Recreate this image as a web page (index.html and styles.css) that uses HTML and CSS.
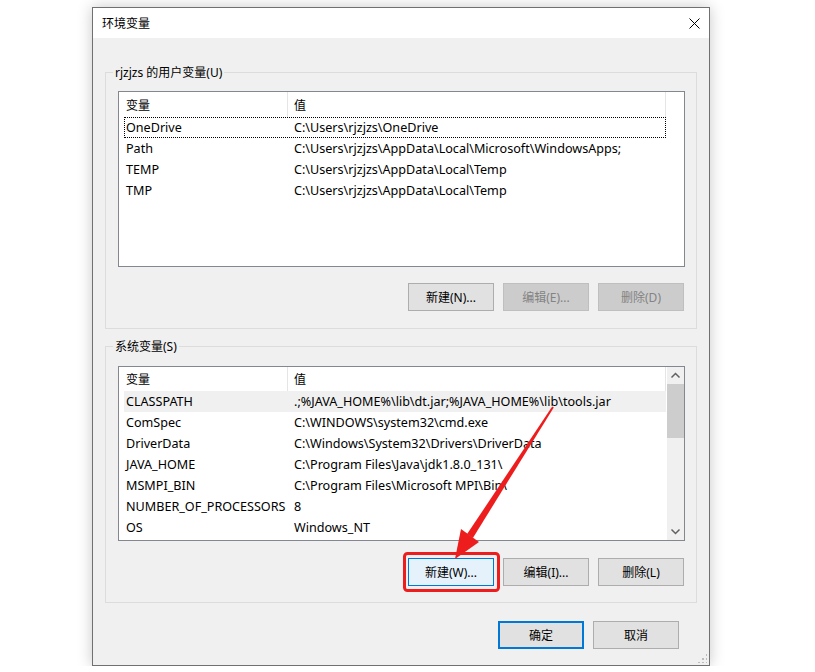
FILE: index.html
```html
<!DOCTYPE html>
<html lang="zh-CN">
<head>
	<meta charset="utf-8">
	<title>环境变量</title>
	<link rel="stylesheet" href="styles.css">
</head>
<body>
	<div class="window">
		<div class="titlebar">
			<span class="title">环境变量</span>
			<svg class="close" width="11" height="11" viewBox="0 0 11 11">
				<path d="M0.5 0.5 L10.5 10.5 M10.5 0.5 L0.5 10.5" stroke="#000" stroke-width="1"/>
			</svg>
		</div>
		<div class="content">
			<div class="group group-user">
				<span class="legend">rjzjzs 的用户变量(U)</span>
				<div class="list list-user">
					<div class="list-body">
						<div class="list-head"><div class="col-name">变量</div><div class="col-value">值</div></div>
						<div class="row row-focus"><div class="col-name">OneDrive</div><div class="col-value">C:\Users\rjzjzs\OneDrive</div></div>
						<div class="row"><div class="col-name">Path</div><div class="col-value">C:\Users\rjzjzs\AppData\Local\Microsoft\WindowsApps;</div></div>
						<div class="row"><div class="col-name">TEMP</div><div class="col-value">C:\Users\rjzjzs\AppData\Local\Temp</div></div>
						<div class="row"><div class="col-name">TMP</div><div class="col-value">C:\Users\rjzjzs\AppData\Local\Temp</div></div>
					</div>
				</div>
				<div class="buttons">
					<button class="btn">新建(N)...</button>
					<button class="btn" disabled>编辑(E)...</button>
					<button class="btn" disabled>删除(D)</button>
				</div>
			</div>

			<div class="group group-sys">
				<span class="legend">系统变量(S)</span>
				<div class="list list-sys">
					<div class="list-body">
						<div class="list-head"><div class="col-name">变量</div><div class="col-value">值</div></div>
						<div class="row row-hover"><div class="col-name">CLASSPATH</div><div class="col-value">.;%JAVA_HOME%\lib\dt.jar;%JAVA_HOME%\lib\tools.jar</div></div>
						<div class="row"><div class="col-name">ComSpec</div><div class="col-value">C:\WINDOWS\system32\cmd.exe</div></div>
						<div class="row"><div class="col-name">DriverData</div><div class="col-value">C:\Windows\System32\Drivers\DriverData</div></div>
						<div class="row"><div class="col-name">JAVA_HOME</div><div class="col-value">C:\Program Files\Java\jdk1.8.0_131\</div></div>
						<div class="row"><div class="col-name">MSMPI_BIN</div><div class="col-value">C:\Program Files\Microsoft MPI\Bin\</div></div>
						<div class="row"><div class="col-name">NUMBER_OF_PROCESSORS</div><div class="col-value">8</div></div>
						<div class="row"><div class="col-name">OS</div><div class="col-value">Windows_NT</div></div>
					</div>
					<div class="scrollbar">
						<svg class="sb-arrow" width="17" height="17" viewBox="0 0 17 17">
							<path d="M4.5 10.5 L8.5 6.5 L12.5 10.5" fill="none" stroke="#606060" stroke-width="1.5"/>
						</svg>
						<div class="sb-track"><div class="sb-thumb"></div></div>
						<svg class="sb-arrow" width="17" height="17" viewBox="0 0 17 17">
							<path d="M4.5 6.5 L8.5 10.5 L12.5 6.5" fill="none" stroke="#606060" stroke-width="1.5"/>
						</svg>
					</div>
				</div>
				<div class="buttons">
					<button class="btn btn-hot">新建(W)...</button>
					<button class="btn">编辑(I)...</button>
					<button class="btn">删除(L)</button>
				</div>
			</div>

			<div class="footer">
				<button class="btn btn-default">确定</button>
				<button class="btn">取消</button>
			</div>
		</div>
		<div class="grip"></div>
	</div>

	<!-- red annotation drawn over the screenshot -->
	<svg class="annot" width="815" height="672" viewBox="0 0 815 672">
		<rect x="404.5" y="553.5" width="94" height="37" rx="3" fill="none" stroke="#ee1d1d" stroke-width="3"/>
		<polygon points="553.8,407.5 552.2,406.5 467.1,534.1 472.9,537.9" fill="#ee1d1d"/>
		<polygon points="455,559 461,529 479,542" fill="#ee1d1d"/>
	</svg>
</body>
</html>
```

FILE: styles.css
```css
body {
	margin: 0;
	background: #fff;
	font-family: "Noto Sans", "Noto Sans CJK SC", sans-serif;
	font-size: 12px;
	color: #000;
}
.window {
	position: relative;
	box-sizing: border-box;
	width: 618px;
	height: 659px;
	margin: 7px 0 0 92px;
	border: 1px solid #707070;
	background: #f0f0f0;
	box-shadow: 0 0 14px rgba(0, 0, 0, .22);
}
.titlebar {
	display: flex;
	align-items: center;
	justify-content: space-between;
	height: 30px;
	padding: 0 9px 0 9px;
	background: #fff;
}
.close {
	display: block;
}
.content {
	padding: 34px 12px 0 12px;
}
.group {
	position: relative;
	border: 1px solid #dcdcdc;
	padding: 18px 11px 17px 12px;
}
.group-sys {
	margin-top: 17px;
	padding-top: 19px;
	padding-bottom: 16px;
}
.legend {
	position: absolute;
	top: -8px;
	left: 7px;
	padding: 0 2px;
	line-height: 16px;
	background: #f0f0f0;
}
.list {
	display: flex;
	box-sizing: border-box;
	height: 176px;
	border: 1px solid #828790;
	background: #fff;
}
.list-sys {
	height: 175px;
}
.list-body {
	flex: 1;
	padding-left: 5px;
}
.list-head, .row {
	display: flex;
	width: 542px;
}
.list-head {
	height: 24px;
	line-height: 25px;
}
.list-user .list-head {
	height: 25px;
	line-height: 27px;
}
.list-head .col-name, .list-head .col-value {
	border-right: 1px solid #e5e5e5;
}
.row {
	height: 21px;
	line-height: 22px;
	overflow: hidden;
	box-sizing: border-box;
	white-space: nowrap;
	font-size: 12.6px;
}
.col-name {
	box-sizing: border-box;
	width: 164px;
	padding-left: 2px;
}
.col-value {
	box-sizing: border-box;
	width: 378px;
	padding-left: 6px;
}
.row-focus {
	outline: 1px dotted #000;
	outline-offset: -1px;
}
.row-hover {
	background: #f0f0f0;
}
.scrollbar {
	display: flex;
	flex-direction: column;
	width: 17px;
	background: #f0f0f0;
}
.sb-arrow {
	display: block;
}
.sb-track {
	flex: 1;
}
.sb-thumb {
	height: 54px;
	background: #cdcdcd;
}
.buttons {
	display: flex;
	justify-content: flex-end;
	gap: 9px;
	margin-top: 16px;
	padding-right: 1px;
}
.group-sys .buttons {
	margin-top: 17px;
}
.btn {
	box-sizing: border-box;
	width: 86px;
	height: 28px;
	padding: 0;
	border: 1px solid #adadad;
	background: #e1e1e1;
	font-family: inherit;
	font-size: 12px;
	color: #000;
}
.btn:disabled {
	border-color: #bfbfbf;
	background: #cccccc;
	color: #838383;
}
.btn-hot {
	border-color: #0078d7;
	background: #e5f1fb;
}
.btn-default {
	border: 2px solid #0078d7;
}
.footer {
	display: flex;
	justify-content: flex-end;
	gap: 9px;
	margin-top: 18px;
	padding-right: 18px;
}
.grip {
	position: absolute;
	right: 2px;
	bottom: 2px;
	width: 10px;
	height: 10px;
	background:
		radial-gradient(circle, #bcbcbc 1px, transparent 1.2px) 0 0 / 4px 4px;
	clip-path: polygon(100% 0, 100% 100%, 0 100%);
}
.annot {
	position: absolute;
	top: 0;
	left: 0;
	pointer-events: none;
}
```
